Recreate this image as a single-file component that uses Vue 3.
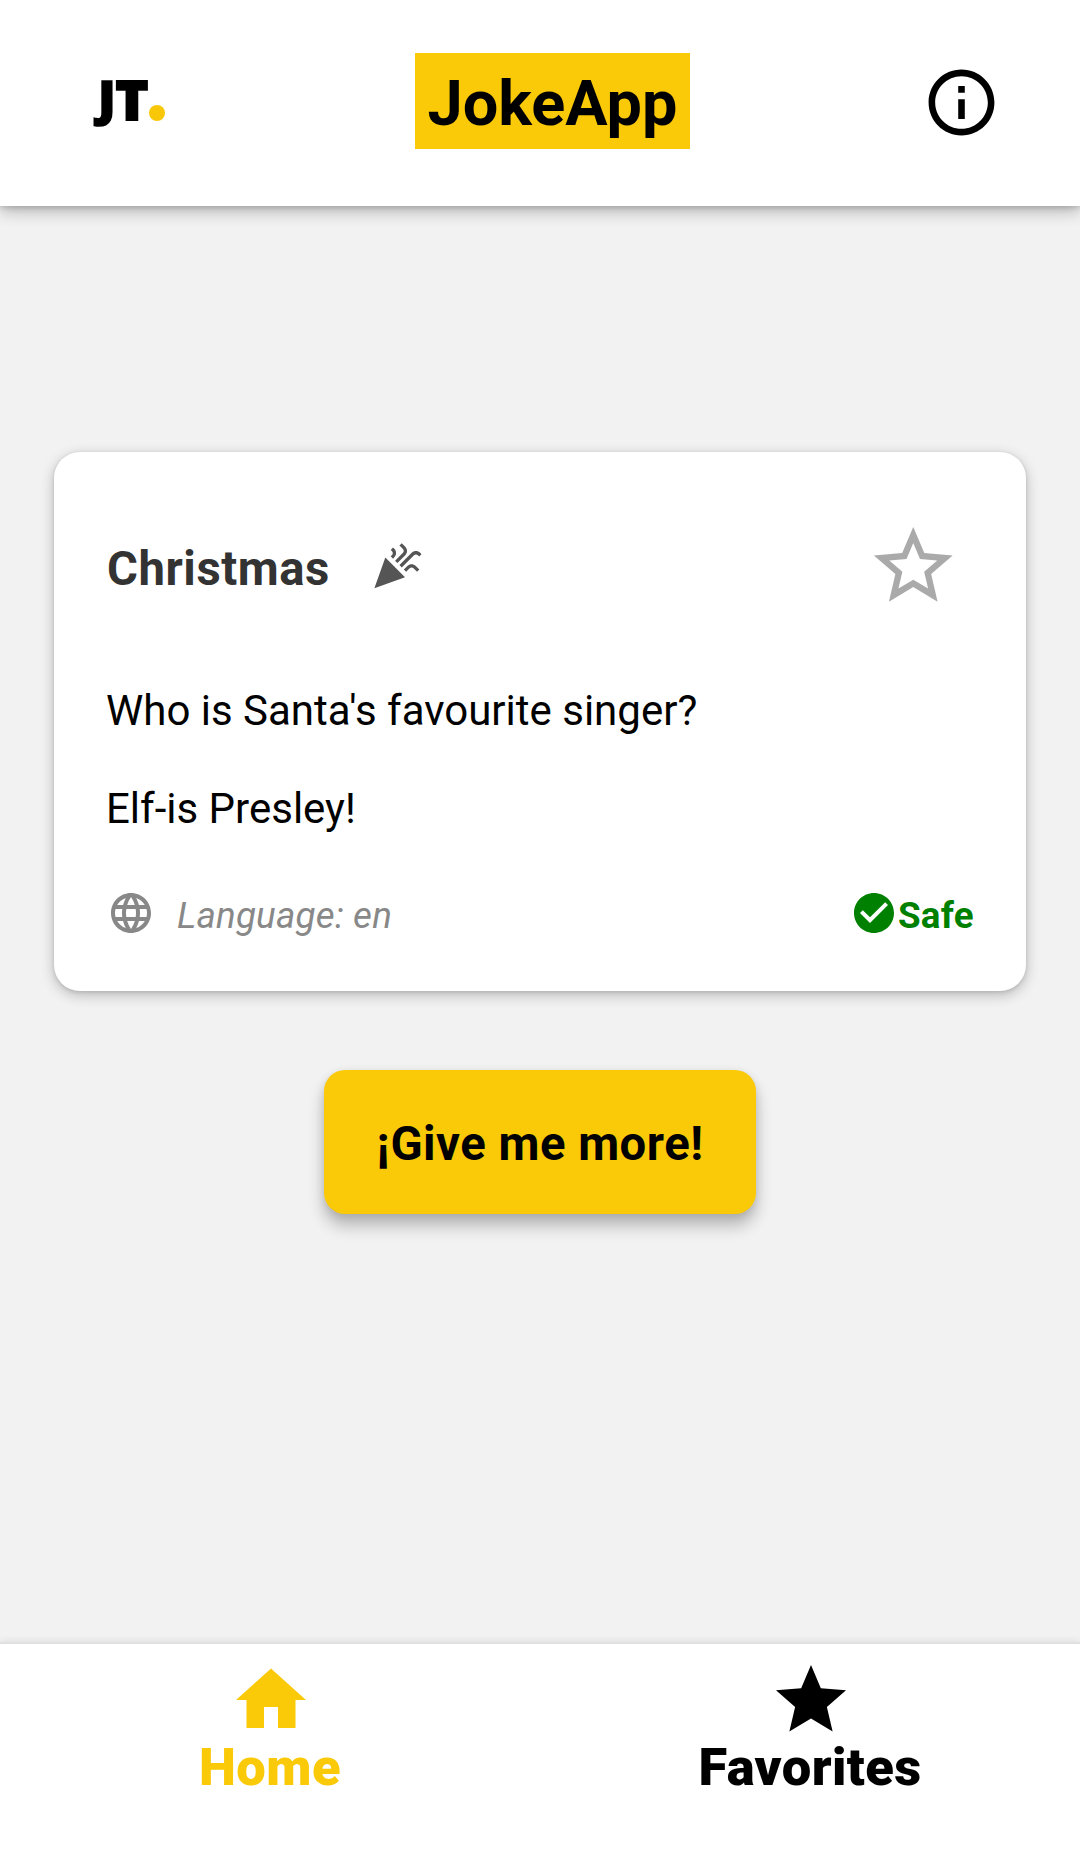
<script setup>
import { ref } from 'vue'

const joke = {
  category: 'Christmas',
  lines: ["Who is Santa's favourite singer?", 'Elf-is Presley!'],
  lang: 'en',
}

const tabs = [
  { name: 'Home', icon: 'M10 20v-6h4v6h5v-8h3L12 3 2 12h3v8z' },
  {
    name: 'Favorites',
    icon: 'M12 17.27L18.18 21l-1.64-7.03L22 9.24l-7.19-.61L12 2 9.19 8.63 2 9.24l5.46 4.73L5.82 21z',
  },
]
const active = ref('Home')
</script>

<template>
  <div class="app">
    <header class="header">
      <div class="logo">
        <span class="logo-text"><span class="logo-j">J</span><span class="logo-t">T</span></span><i class="dot"></i>
      </div>
      <h1 class="title">JokeApp</h1>
      <svg class="info" viewBox="0 0 24 24">
        <path d="M11 17h2v-6h-2v6zm1-15C6.48 2 2 6.48 2 12s4.48 10 10 10 10-4.48 10-10S17.52 2 12 2zm0 18c-4.41 0-8-3.59-8-8s3.59-8 8-8 8 3.59 8 8-3.59 8-8 8zM11 9h2V7h-2v2z" />
      </svg>
    </header>

    <main class="main">
      <article class="card">
        <div class="card-head">
          <h2 class="category">{{ joke.category }}</h2>
          <svg class="popper" viewBox="0 0 24 24">
            <path d="M2 22l14-5-9-9zM14.53 12.53l5.59-5.59c.49-.49 1.28-.49 1.77 0l.59.59 1.06-1.06-.59-.59c-1.07-1.07-2.82-1.07-3.89 0l-5.59 5.59 1.06 1.06zM10.06 6.88l-.59.59 1.06 1.06.59-.59c1.07-1.07 1.07-2.82 0-3.89l-.59-.59-1.06 1.07.59.59c.48.48.48 1.28 0 1.76zM17.06 11.88l-1.59 1.59 1.06 1.06 1.59-1.59c.49-.49 1.28-.49 1.77 0l1.61 1.61 1.06-1.06-1.61-1.61c-1.08-1.07-2.82-1.07-3.89 0zM15.06 5.88l-3.59 3.59 1.06 1.06 3.59-3.59c1.07-1.07 1.07-2.82 0-3.89l-1.59-1.59-1.06 1.06 1.59 1.59c.48.49.48 1.29 0 1.77z" />
          </svg>
          <svg class="star" viewBox="0 0 24 24">
            <path d="M22 9.24l-7.19-.62L12 2 9.19 8.63 2 9.24l5.46 4.73L5.82 21 12 17.27 18.18 21l-1.63-7.03L22 9.24zM12 15.4l-3.76 2.27 1-4.28-3.32-2.88 4.38-.38L12 6.1l1.71 4.04 4.38.38-3.32 2.88 1 4.28L12 15.4z" />
          </svg>
        </div>
        <p v-for="line in joke.lines" :key="line" class="line">{{ line }}</p>
        <div class="card-foot">
          <svg class="small-icon" viewBox="0 0 24 24">
            <path d="M11.99 2C6.47 2 2 6.48 2 12s4.47 10 9.99 10C17.52 22 22 17.52 22 12S17.52 2 11.99 2zm6.93 6h-2.95c-.32-1.25-.78-2.45-1.38-3.56 1.84.63 3.37 1.91 4.33 3.56zM12 4.04c.83 1.2 1.48 2.53 1.91 3.96h-3.82c.43-1.43 1.08-2.76 1.91-3.96zM4.26 14C4.1 13.36 4 12.69 4 12s.1-1.36.26-2h3.38c-.08.66-.14 1.32-.14 2s.06 1.34.14 2H4.26zm.82 2h2.95c.32 1.25.78 2.45 1.38 3.56-1.84-.63-3.37-1.9-4.33-3.56zm2.95-8H5.08c.96-1.66 2.49-2.93 4.33-3.56C8.81 5.55 8.35 6.75 8.03 8zM12 19.96c-.83-1.2-1.48-2.53-1.91-3.96h3.82c-.43 1.43-1.08 2.76-1.91 3.96zM14.34 14H9.66c-.09-.66-.16-1.32-.16-2s.07-1.35.16-2h4.68c.09.65.16 1.32.16 2s-.07 1.34-.16 2zm.25 5.56c.6-1.11 1.06-2.31 1.38-3.56h2.95c-.96 1.65-2.49 2.93-4.33 3.56zM16.36 14c.08-.66.14-1.32.14-2s-.06-1.34-.14-2h3.38c.16.64.26 1.31.26 2s-.1 1.36-.26 2h-3.38z" />
          </svg>
          <span class="lang">Language: {{ joke.lang }}</span>
          <span class="safe">
            <svg class="small-icon" viewBox="0 0 24 24">
              <path d="M12 2C6.48 2 2 6.48 2 12s4.48 10 10 10 10-4.48 10-10S17.52 2 12 2zm-2 15l-5-5 1.41-1.41L10 14.17l7.59-7.59L19 8l-9 9z" />
            </svg>
            <span class="safe-text">Safe</span>
          </span>
        </div>
      </article>
      <button class="more">¡Give me more!</button>
    </main>

    <nav class="tabs">
      <a
        v-for="tab in tabs"
        :key="tab.name"
        class="tab"
        :class="{ active: tab.name === active }"
        @click="active = tab.name"
      >
        <svg class="tab-icon" viewBox="0 0 24 24"><path :d="tab.icon" /></svg>
        <span>{{ tab.name }}</span>
      </a>
    </nav>
  </div>
</template>

<style>
body {
  margin: 0;
}
</style>

<style scoped>
.app {
  display: flex;
  flex-direction: column;
  width: 1080px;
  height: 1853px;
  overflow: hidden;
  background: #f2f2f2;
  color: #000;
  font-family: Roboto, sans-serif;
}
svg {
  display: block;
  flex: none;
  fill: currentColor;
}
h1,
h2,
p {
  margin: 0;
}
.header {
  box-sizing: border-box;
  display: flex;
  height: 206px;
  padding: 53px 79px 0 95px;
  background: #fff;
  box-shadow: 0 4px 16px rgba(0, 0, 0, 0.3), 0 2px 5px rgba(0, 0, 0, 0.12);
}
.logo {
  display: flex;
  width: 80px;
  height: 96px;
}
.logo-text {
  display: flex;
  width: 52px;
  margin-top: 9px;
  font: 800 55.5px/74px 'Open Sans', sans-serif;
  -webkit-text-stroke: 2px currentColor;
}
.logo-j {
  transform: translateX(1px) scale(0.88, 0.87);
  transform-origin: 100% 18px;
}
.logo-t {
  margin-left: 1px;
}
.dot {
  flex: none;
  width: 16px;
  height: 16px;
  margin: 52px 0 0 2px;
  border-radius: 50%;
  background: #f8c808;
}
.title {
  box-sizing: border-box;
  width: 275px;
  height: 96px;
  margin-left: 240px;
  padding-top: 14px;
  background: #fac908;
  font-size: 63px;
  line-height: 74px;
  font-weight: 700;
  text-align: center;
}
.info {
  width: 79px;
  height: 79px;
  margin: 10px 0 0 auto;
}
.main {
  display: flex;
  flex: 1;
  flex-direction: column;
  align-items: center;
}
.card {
  box-sizing: border-box;
  width: 972px;
  height: 539px;
  margin-top: 246px;
  padding: 67px 52px 0 53px;
  border-radius: 26px;
  background: #fff;
  box-shadow: 0 4px 14px rgba(0, 0, 0, 0.24), 0 1px 4px rgba(0, 0, 0, 0.12);
}
.card-head {
  display: flex;
  height: 143px;
}
.category {
  margin-top: 22px;
  color: #333;
  font-size: 47.25px;
  line-height: 56px;
  letter-spacing: 0.55px;
}
.popper {
  width: 52.5px;
  height: 52.5px;
  margin: 21px 0 0 40px;
  color: #555;
}
.star {
  width: 94.5px;
  height: 94.5px;
  margin: 0 13.5px 0 auto;
  color: #aaa;
}
.line {
  margin: 24px 0 49px -1px;
  font-size: 42px;
  line-height: 49px;
}
.line + .line {
  margin-top: 0;
}
.card-foot {
  display: flex;
  height: 48px;
  margin-top: 56px;
  color: #888;
}
.small-icon {
  width: 48px;
  height: 48px;
}
.lang {
  margin: 5px 0 0 22px;
  font-size: 36.75px;
  font-style: italic;
  line-height: 43px;
  letter-spacing: 0.2px;
}
.safe {
  display: flex;
  margin-left: auto;
  color: #008000;
}
.safe-text {
  margin-top: 5px;
  font-size: 36.75px;
  font-weight: 700;
  line-height: 43px;
  letter-spacing: 0.3px;
}
.more {
  width: 432px;
  height: 144px;
  margin-top: 79px;
  padding: 4px 0 0;
  border: 0;
  border-radius: 21px;
  background: #fac908;
  color: #000;
  font: 700 47.25px/56px Roboto, sans-serif;
  letter-spacing: 0.5px;
  box-shadow: 0 12px 16px rgba(0, 0, 0, 0.24), 0 2px 10px rgba(0, 0, 0, 0.1);
}
.tabs {
  box-sizing: border-box;
  display: flex;
  height: 211px;
  border-top: 2px solid #e0e0e0;
  background: #fff;
  box-shadow: 0 0 8px rgba(0, 0, 0, 0.1);
}
.tab {
  display: flex;
  flex: 1;
  flex-direction: column;
  align-items: center;
  padding-top: 14px;
  font-size: 52.5px;
  font-weight: 900;
  line-height: 62px;
  letter-spacing: 0.4px;
}
.tab-icon {
  width: 84px;
  height: 84px;
  margin: 0 0 -6px 2px;
}
.active {
  color: #fac908;
}
</style>
